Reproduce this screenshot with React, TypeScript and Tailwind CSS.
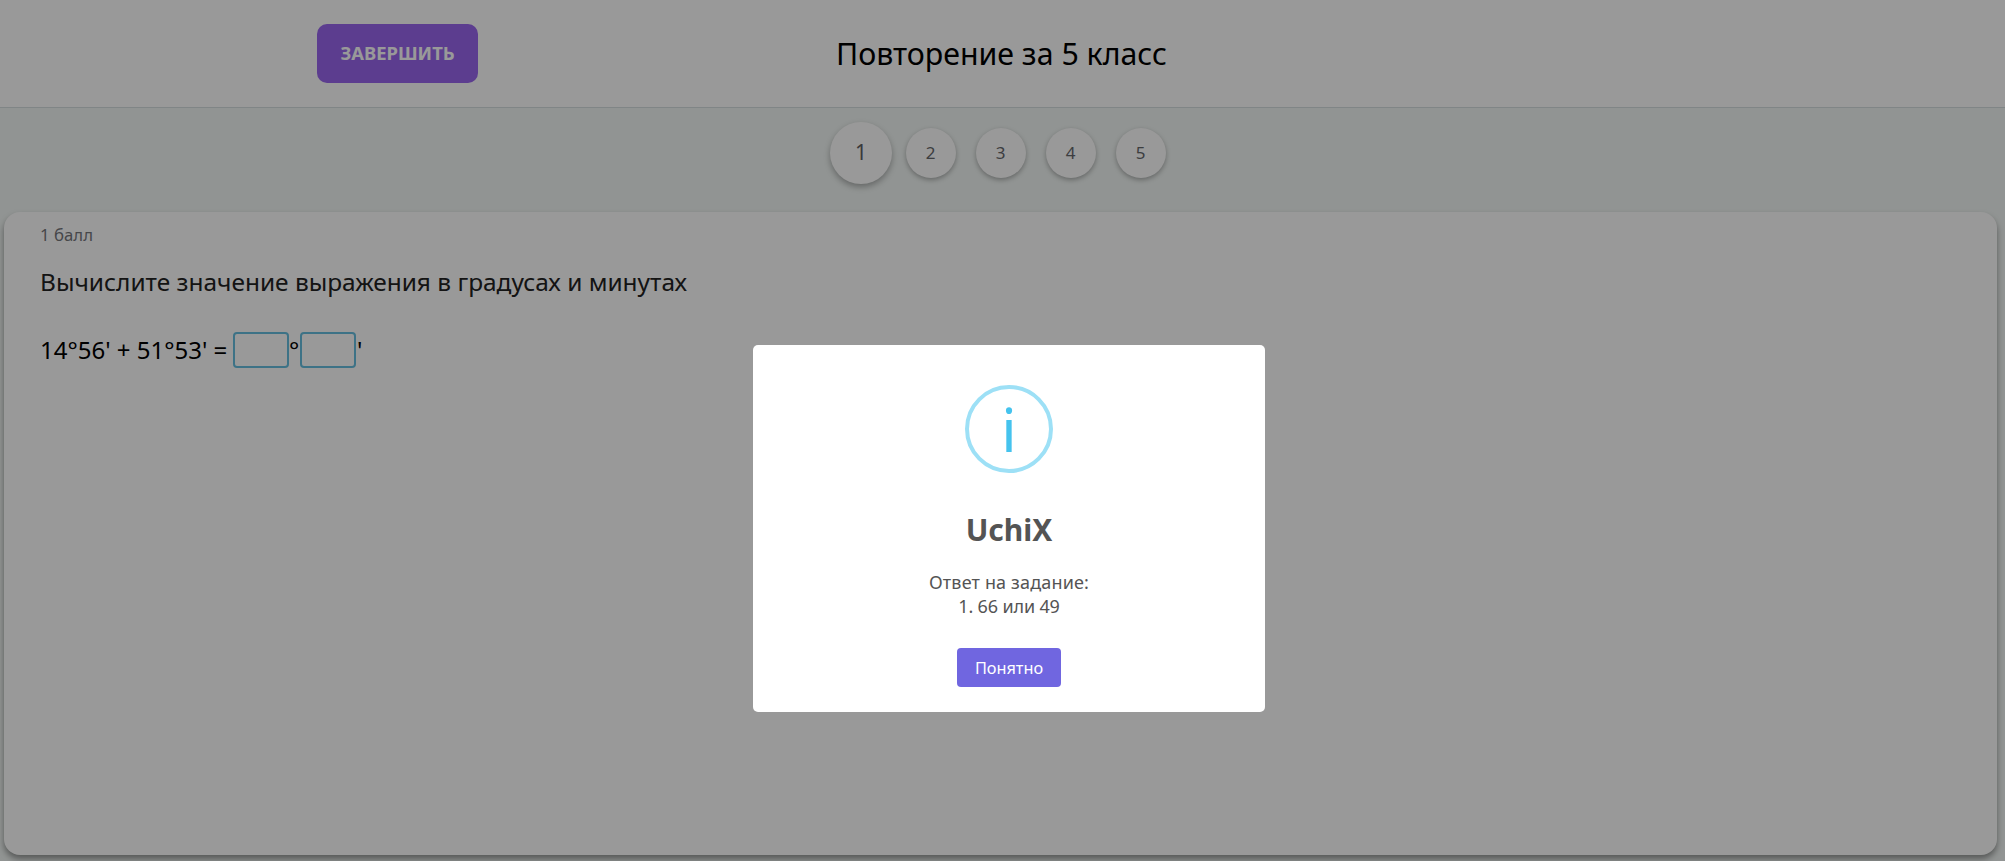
const steps = [2, 3, 4, 5];

function Header() {
  return (
    <header className="flex h-[108px] border-b border-[#d6dedf] bg-white">
      <div className="flex w-[836px] pt-6 pl-[317px]">
        <button className="h-[59px] w-[161px] rounded-[10px] bg-[#9966ee] pb-0.5 text-[18.4px] font-bold text-white">
          ЗАВЕРШИТЬ
        </button>
      </div>
      <h1 className="pt-[33px] text-[30.3px] leading-[42px] whitespace-nowrap text-black">
        Повторение за 5 класс
      </h1>
    </header>
  );
}

function Steps() {
  return (
    <nav className="flex h-[104px] items-start pt-[14px] pl-[830px] text-[#66686b]">
      <div className="flex h-[62px] w-[62px] items-center justify-center rounded-full bg-white text-[21px] text-[#5f6164] shadow-[0_3px_6px_rgba(0,0,0,0.3)]">
        1
      </div>
      <div className="flex gap-5 pt-[6px] pl-[14px]">
        {steps.map((n) => (
          <div
            key={n}
            className="flex h-[50px] w-[50px] items-center justify-center rounded-full bg-white pr-px text-[17px] shadow-[0_2px_5px_rgba(0,0,0,0.3)]"
          >
            {n}
          </div>
        ))}
      </div>
    </nav>
  );
}

function Task() {
  return (
    <main className="ml-1 h-[643px] w-[1993px] rounded-2xl bg-white px-9 pt-[11px] shadow-[0_4px_6px_rgba(0,0,0,0.4)]">
      <p className="text-[16.8px] leading-6 text-[#76777c]">1 балл</p>
      <h2 className="mt-[19px] text-[24.45px] leading-8 text-[#222222]">
        Вычислите значение выражения в градусах и минутах
      </h2>
      <div className="mt-[34px] flex h-9 items-center text-2xl text-black">
        <span className="w-[193px] whitespace-nowrap">14°56' + 51°53' =</span>
        <input className="h-9 w-14 rounded border-2 border-[#66bfe0] bg-white" />
        <span className="w-[11px]">°</span>
        <input className="h-9 w-14 rounded border-2 border-[#66bfe0] bg-white" />
        <span className="pl-px">'</span>
      </div>
    </main>
  );
}

function Modal() {
  return (
    <div className="fixed inset-0 bg-black/40 pt-[345px] pl-[753px]">
      <div className="flex h-[367px] w-[512px] flex-col items-center rounded-[5px] bg-white pt-10 text-[#545454]">
        <div className="flex h-[88px] w-[88px] items-center justify-center rounded-full border-4 border-[#9de0f6] text-[60px] leading-[80px] text-[#45c3ee]">
          i
        </div>
        <h3 className="mt-[37px] text-[30px] leading-10 font-bold">UchiX</h3>
        <div className="mt-5 flex flex-col items-center text-lg leading-6">
          <p className="tracking-[0.15px]">Ответ на задание:</p>
          <p className="tracking-[-0.15px]">1. 66 или 49</p>
        </div>
        <button className="mt-[30px] h-[39px] w-[104px] rounded bg-[#7066e0] text-[16.3px] leading-6 text-white">
          Понятно
        </button>
      </div>
    </div>
  );
}

export default function App() {
  return (
    <div className="h-[861px] overflow-hidden bg-[#f2f7f5] font-['Noto_Sans',sans-serif]">
      <Header />
      <Steps />
      <Task />
      <Modal />
    </div>
  );
}
